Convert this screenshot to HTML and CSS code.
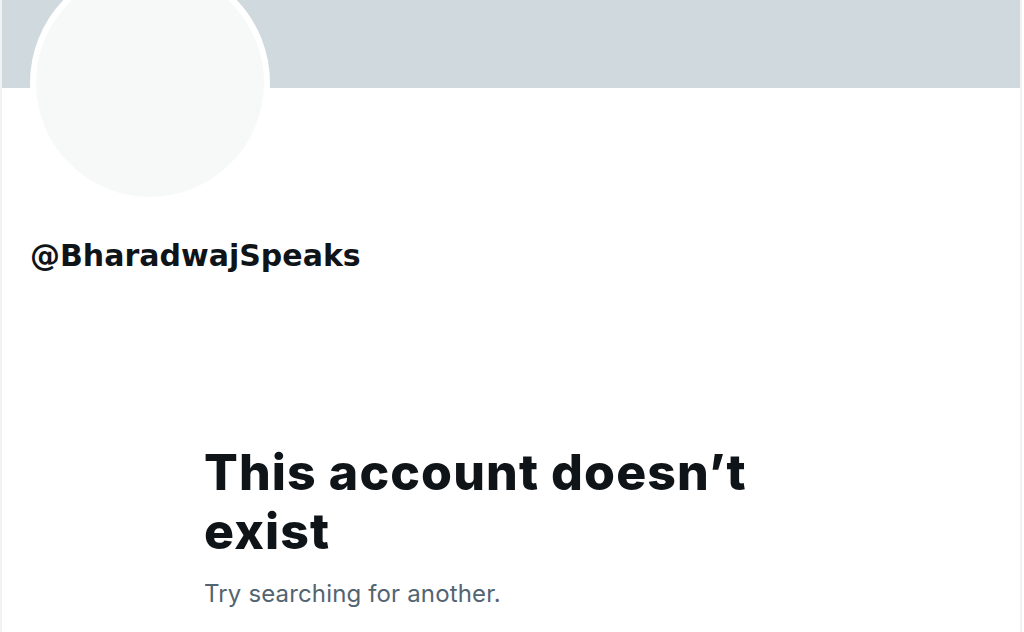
FILE: index.html
```html
<!DOCTYPE html>
<html lang="en">
<head>
  <meta charset="UTF-8" />
  <title>Profile</title>
  <link rel="stylesheet" href="styles.css">
</head>
<body>
  <div class="profile">
    <div class="banner"></div>
    <div class="info">
      <div class="avatar"></div>
      <div class="handle">@BharadwajSpeaks</div>
    </div>
    <div class="empty">
      <h1 class="empty-title">This account doesn’t exist</h1>
      <p class="empty-text">Try searching for another.</p>
    </div>
  </div>
</body>
</html>
```

FILE: styles.css
```css
/* Global */
body {
  margin: 0;
  background: #fff;
  font-family: Inter, "Liberation Sans", sans-serif;
  color: #0f1419;
  overflow: hidden;
}
/* Page column */
.profile {
  height: 632px;
  margin-right: 2px;
  border-left: 2px solid #eff3f4;
  border-right: 2px solid #eff3f4;
}
.banner {
  height: 88px;
  background: #cfd9de;
}
/* Avatar + handle */
.info {
  padding-left: 28px;
}
.avatar {
  width: 228px;
  height: 228px;
  margin-top: -125px;
  border: 6px solid #fff;
  border-radius: 50%;
  background: #f7f9f9;
}
.handle {
  margin-top: 36px;
  font-family: "DejaVu Sans", sans-serif;
  font-size: 30px;
  font-weight: 700;
  line-height: 34px;
}
/* Empty state */
.empty {
  width: 614px;
  margin: 170px auto 0;
}
.empty-title {
  margin: 0;
  font-size: 50px;
  font-weight: 800;
  line-height: 59px;
  letter-spacing: 1.1px;
}
.empty-text {
  margin: 18px 0 0;
  font-size: 24px;
  line-height: 30px;
  letter-spacing: 0.15px;
  color: #536471;
}
```
